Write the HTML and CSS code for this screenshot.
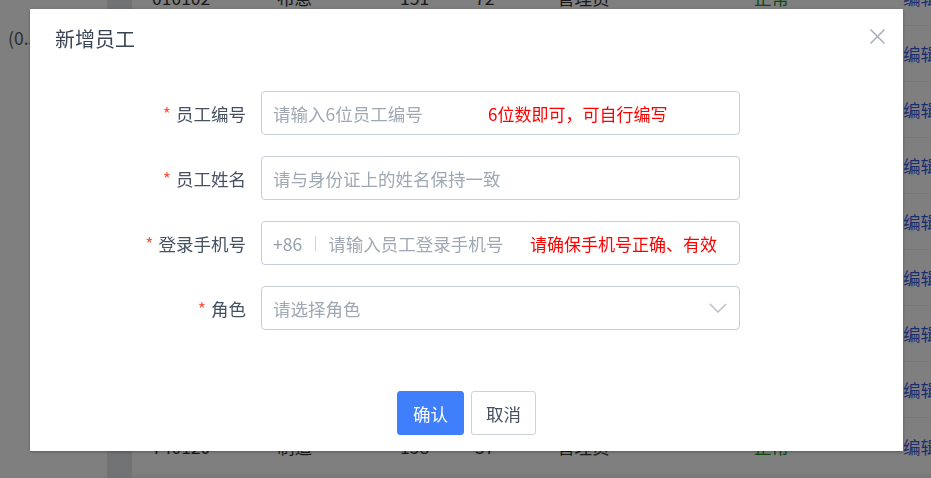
FILE: index.html
```html
<!DOCTYPE html>
<html lang="zh-CN">
<head>
<meta charset="utf-8">
<title>新增员工</title>
<link rel="stylesheet" href="styles.css">
</head>
<body>
<div class="page">
  <aside class="side"><span class="side-text">(0.5)</span></aside>
  <div class="strip"></div>
  <main class="content">
    <div class="table">
      <div class="row"><span>010102</span><span>布急</span><span>151</span><span>72</span><span>管理员</span><span class="ok">正常</span><span class="link">编辑</span></div>
      <div class="row"><span>010103</span><span>张明</span><span>152</span><span>68</span><span>店员</span><span class="ok">正常</span><span class="link">编辑</span></div>
      <div class="row"><span>010104</span><span>李华</span><span>153</span><span>65</span><span>店员</span><span class="ok">正常</span><span class="link">编辑</span></div>
      <div class="row"><span>010105</span><span>王芳</span><span>154</span><span>61</span><span>店员</span><span class="ok">正常</span><span class="link">编辑</span></div>
      <div class="row"><span>010106</span><span>赵强</span><span>155</span><span>59</span><span>店员</span><span class="ok">正常</span><span class="link">编辑</span></div>
      <div class="row"><span>010107</span><span>刘洋</span><span>156</span><span>54</span><span>店员</span><span class="ok">正常</span><span class="link">编辑</span></div>
      <div class="row"><span>010108</span><span>陈静</span><span>157</span><span>50</span><span>店员</span><span class="ok">正常</span><span class="link">编辑</span></div>
      <div class="row"><span>010109</span><span>杨帆</span><span>158</span><span>47</span><span>店员</span><span class="ok">正常</span><span class="link">编辑</span></div>
      <div class="row"><span>740120</span><span>制造</span><span>158</span><span>37</span><span>管理员</span><span class="ok">正常</span><span class="link">编辑</span></div>
    </div>
  </main>
</div>

<div class="overlay">
  <div class="dialog">
    <div class="dialog-header">
      <span class="dialog-title">新增员工</span>
      <button class="dialog-close" type="button" aria-label="关闭">
        <svg width="15" height="15" viewBox="0 0 15 15"><path d="M0.5 0.5 L14.5 14.5 M14.5 0.5 L0.5 14.5" stroke="#a7afba" stroke-width="1.5" fill="none"/></svg>
      </button>
    </div>
    <div class="dialog-body">
      <div class="form-row">
        <label class="form-label"><span class="req">*</span>员工编号</label>
        <div class="field">
          <span class="placeholder">请输入6位员工编号</span>
          <span class="hint hint-id">6位数即可，可自行编写</span>
        </div>
      </div>
      <div class="form-row">
        <label class="form-label"><span class="req">*</span>员工姓名</label>
        <div class="field">
          <span class="placeholder">请与身份证上的姓名保持一致</span>
        </div>
      </div>
      <div class="form-row">
        <label class="form-label"><span class="req">*</span>登录手机号</label>
        <div class="field">
          <span class="prefix">+86</span><span class="sep"></span><span class="placeholder">请输入员工登录手机号</span>
          <span class="hint hint-phone">请确保手机号正确、有效</span>
        </div>
      </div>
      <div class="form-row">
        <label class="form-label"><span class="req">*</span>角色</label>
        <div class="field field-select">
          <span class="placeholder">请选择角色</span>
          <svg class="chevron" width="18" height="10" viewBox="0 0 18 10"><path d="M1 1 L9 9 L17 1" stroke="#b9c0ca" stroke-width="1.5" fill="none"/></svg>
        </div>
      </div>
    </div>
    <div class="dialog-footer">
      <button class="btn btn-primary" type="button">确认</button>
      <button class="btn btn-default" type="button">取消</button>
    </div>
  </div>
</div>
</body>
</html>
```

FILE: styles.css
```css
* { box-sizing: border-box; }

html, body {
  margin: 0;
  padding: 0;
  width: 931px;
  height: 478px;
  overflow: hidden;
  font-family: "Noto Sans CJK SC", "Noto Sans", sans-serif;
  font-size: 17.5px;
}

.page {
  display: flex;
  height: 478px;
  overflow: hidden;
  background: #ffffff;
}

.side {
  width: 107px;
  flex: none;
  background: #ffffff;
  padding: 25px 0 0 8px;
}

.side-text {
  color: #555a60;
  line-height: 24px;
  white-space: nowrap;
}

.strip {
  width: 25px;
  flex: none;
  background: #e3e5e9;
}

.content {
  flex: 1;
  background: #f4f5f6;
  overflow: hidden;
}

.table {
  margin-top: -30px;
  background: #ffffff;
  width: 830px;
}

.row {
  display: grid;
  grid-template-columns: 125px 123px 75px 82px 197px 149px 1fr;
  padding-left: 20px;
  height: 56px;
  align-items: center;
  border-bottom: 1px solid #eeeeee;
  color: #333333;
  white-space: nowrap;
}

.row:last-child { border-bottom: none; }

.ok { color: #1a9a1a; }
.link { color: #3a5ee0; }

.overlay {
  position: fixed;
  inset: 0;
  background: rgba(0, 0, 0, 0.5);
  padding: 9px 0 0 30px;
}

.dialog {
  width: 873px;
  height: 442px;
  background: #ffffff;
  box-shadow: 0 1px 3px rgba(0, 0, 0, 0.3);
  position: relative;
  display: flex;
  flex-direction: column;
}

.dialog-header {
  padding: 18px 25px 0;
  height: 43px;
}

.dialog-title {
  font-size: 20px;
  line-height: 24px;
  color: #3a4454;
  display: block;
}

.dialog-close {
  position: absolute;
  top: 20px;
  right: 18px;
  width: 15px;
  height: 15px;
  padding: 0;
  border: 0;
  background: none;
  display: block;
}

.dialog-close svg { display: block; }

.dialog-body {
  padding: 39px 0 0 100px;
  display: flex;
  flex-direction: column;
  gap: 21px;
}

.form-row {
  display: flex;
  align-items: center;
  height: 44px;
}

.form-label {
  width: 131px;
  padding-right: 15px;
  text-align: right;
  color: #465162;
  white-space: nowrap;
}

.req {
  color: #f5553a;
  margin-right: 5px;
}

.field {
  position: relative;
  width: 479px;
  height: 44px;
  border: 1px solid #c8ced7;
  border-radius: 4px;
  padding: 0 11px;
  display: flex;
  align-items: center;
  white-space: nowrap;
}

.placeholder { color: #a0a8b4; }

.prefix { color: #98a0ac; }

.sep {
  width: 1px;
  height: 15px;
  background: #cfd4db;
  margin: 0 12px 0 13px;
}

.hint {
  position: absolute;
  color: #ff0000;
  font-size: 17px;
  top: 10px;
  line-height: 24px;
}

.hint-id { left: 226px; }
.hint-phone { left: 268px; }

.field-select { justify-content: space-between; }
.chevron { display: block; margin-right: 1px; }

.dialog-footer {
  margin-top: auto;
  padding-bottom: 16px;
  display: flex;
  justify-content: center;
  gap: 7px;
}

.btn {
  height: 44px;
  border-radius: 3px;
  font-family: inherit;
  font-size: 17.5px;
  padding: 0;
  cursor: pointer;
}

.btn-primary {
  width: 67px;
  background: #3f7ffb;
  border: 1px solid #3f7ffb;
  color: #ffffff;
}

.btn-default {
  width: 65px;
  background: #ffffff;
  border: 1px solid #cdd2da;
  color: #465162;
}
```
